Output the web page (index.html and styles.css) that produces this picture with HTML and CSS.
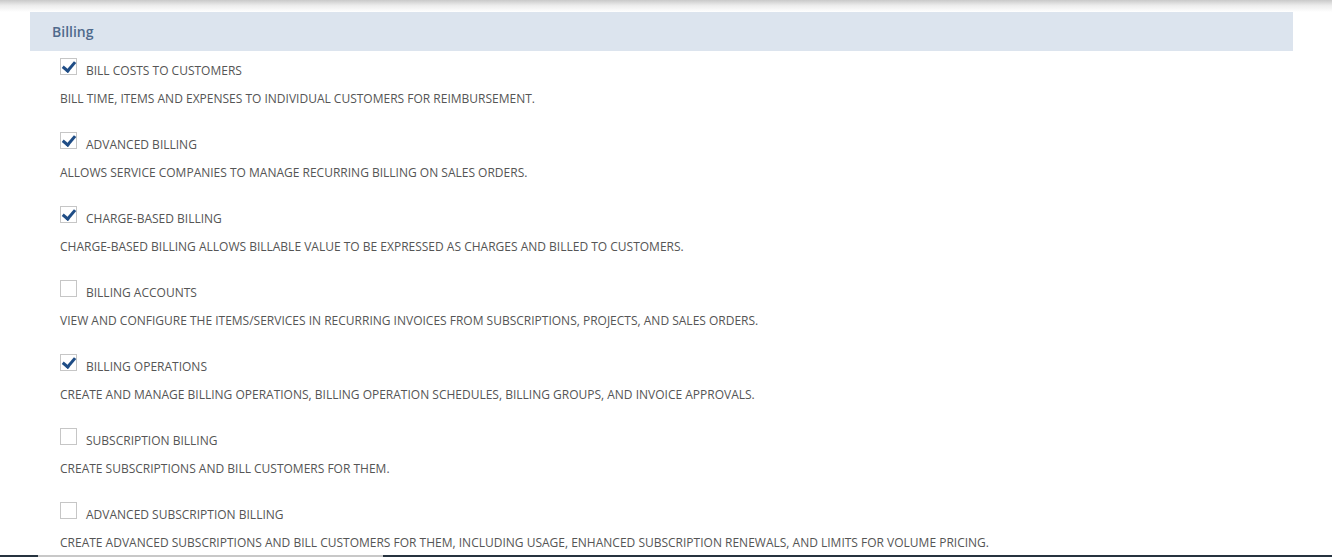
FILE: index.html
```html
<!DOCTYPE html>
<html lang="en">
<head>
    <meta charset="UTF-8">
    <meta name="viewport" content="width=device-width, initial-scale=1.0">
    <title>Enable Features - Billing</title>
    <link rel="stylesheet" href="styles.css">
</head>
<body>
    <div class="top-shade"></div>

    <div class="section">
        <div class="section-header">Billing</div>

        <div class="options">
            <div class="option">
                <label class="option-row">
                    <span class="checkbox checked"></span>
                    <span class="option-label">Bill Costs to Customers</span>
                </label>
                <p class="option-desc">Bill time, items and expenses to individual customers for reimbursement.</p>
            </div>
            <div class="option">
                <label class="option-row">
                    <span class="checkbox checked"></span>
                    <span class="option-label">Advanced Billing</span>
                </label>
                <p class="option-desc">Allows service companies to manage recurring billing on sales orders.</p>
            </div>
            <div class="option">
                <label class="option-row">
                    <span class="checkbox checked"></span>
                    <span class="option-label">Charge-Based Billing</span>
                </label>
                <p class="option-desc">Charge-based billing allows billable value to be expressed as charges and billed to customers.</p>
            </div>
            <div class="option">
                <label class="option-row">
                    <span class="checkbox"></span>
                    <span class="option-label">Billing Accounts</span>
                </label>
                <p class="option-desc">View and configure the items/services in recurring invoices from subscriptions, projects, and sales orders.</p>
            </div>
            <div class="option">
                <label class="option-row">
                    <span class="checkbox checked"></span>
                    <span class="option-label">Billing Operations</span>
                </label>
                <p class="option-desc">Create and manage billing operations, billing operation schedules, billing groups, and invoice approvals.</p>
            </div>
            <div class="option">
                <label class="option-row">
                    <span class="checkbox"></span>
                    <span class="option-label">Subscription Billing</span>
                </label>
                <p class="option-desc">Create subscriptions and bill customers for them.</p>
            </div>
            <div class="option">
                <label class="option-row">
                    <span class="checkbox"></span>
                    <span class="option-label">Advanced Subscription Billing</span>
                </label>
                <p class="option-desc">Create advanced subscriptions and bill customers for them, including usage, enhanced subscription renewals, and limits for volume pricing.</p>
            </div>
        </div>
    </div>

    <div class="bottom-bar">
        <span class="bar-dark bar-left"></span>
        <span class="bar-light"></span>
        <span class="bar-dark bar-fill"></span>
    </div>
</body>
</html>
```

FILE: styles.css
```css
* {
    margin: 0;
    padding: 0;
    box-sizing: border-box;
    font-family: 'Open Sans', 'Noto Sans', sans-serif;
}

body {
    background: white;
    overflow: hidden;
    height: 557px;
}

.top-shade {
    height: 12px;
    background: linear-gradient(to bottom, #c9c9c9 0%, #ececec 45%, #ffffff 100%);
}

.section {
    margin: 0 39px 0 30px;
}

.section-header {
    height: 39px;
    line-height: 39px;
    padding-left: 22px;
    background-color: #dce4ee;
    color: #4f6a8c;
    font-size: 14px;
    font-weight: 600;
}

.options {
    padding: 7px 0 0 30px;
}

.option {
    margin-bottom: 24px;
}

.option-row {
    display: flex;
    align-items: flex-start;
    gap: 9px;
}

.checkbox {
    flex: none;
    width: 17px;
    height: 17px;
    border: 1px solid #c6c6c6;
    background: white;
    position: relative;
}

.checkbox.checked::after {
    content: "";
    position: absolute;
    left: 4px;
    top: 0;
    width: 5px;
    height: 10px;
    border-right: 3px solid #1f4d86;
    border-bottom: 3px solid #1f4d86;
    transform: rotate(40deg);
}

.option-label,
.option-desc {
    font-size: 12px;
    text-transform: uppercase;
    color: #555;
}

.option-label {
    line-height: 17px;
    padding-top: 4px;
}

.option-desc {
    margin-top: 11px;
    line-height: 18px;
}

.bottom-bar {
    position: fixed;
    left: 0;
    right: 0;
    bottom: 0;
    height: 2px;
    display: flex;
}

.bar-dark {
    background: #26333f;
}

.bar-left {
    width: 38px;
}

.bar-light {
    width: 345px;
    background: #c8c8c8;
}

.bar-fill {
    flex: 1;
}
```
